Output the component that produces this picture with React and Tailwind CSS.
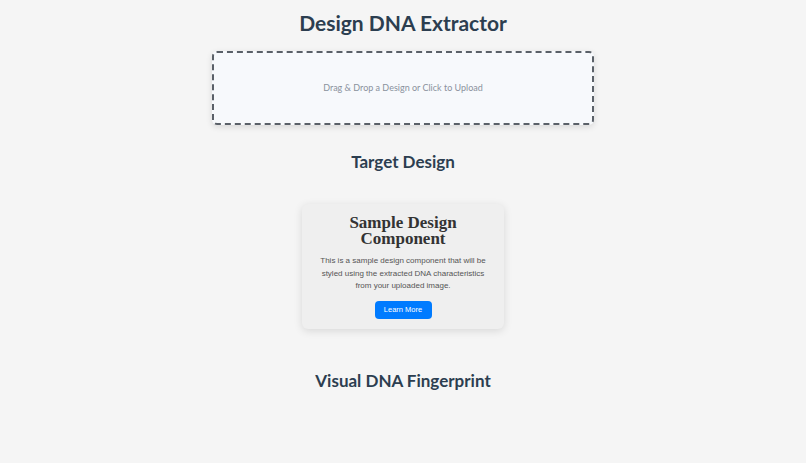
export default function App() {
  return (
    <div
      className="min-h-screen bg-[#f5f5f5] flex flex-col items-center pt-[8px]"
      style={{ fontFamily: "Lato, 'Segoe UI', sans-serif" }}
    >
      <h1 className="text-[21px] leading-[29px] font-bold text-[#2c3e50]">
        Design DNA Extractor
      </h1>

      {/* Upload zone */}
      <div className="mt-[14px] w-[382px] h-[74px] border-2 border-dashed border-[#5a6068] rounded-[5px] bg-[#f7f9fc] shadow-[0_2px_6px_rgba(0,0,0,0.12)] flex items-center justify-center cursor-pointer">
        <p className="text-[9px] text-[#8a919c]">
          Drag &amp; Drop a Design or Click to Upload
        </p>
      </div>

      <h2 className="mt-[25px] text-[17px] leading-[24px] font-bold text-[#2c3e50]">
        Target Design
      </h2>

      {/* Sample card */}
      <div className="mt-[30px] w-[202px] bg-[#efefef] rounded-[6px] shadow-[0_2px_8px_rgba(0,0,0,0.12)] px-[12px] pt-[11px] pb-[10px] flex flex-col items-center text-center">
        <h3
          className="text-[17px] leading-[16px] font-bold text-[#333]"
          style={{ fontFamily: "'Liberation Serif', Georgia, serif" }}
        >
          Sample Design Component
        </h3>
        <p
          className="mt-[8px] text-[8px] leading-[12.5px] text-[#555]"
          style={{ fontFamily: "'Liberation Sans', Arial, sans-serif" }}
        >
          This is a sample design component that will be styled using the
          extracted DNA characteristics from your uploaded image.
        </p>
        <button
          className="mt-[8px] w-[57px] h-[18px] rounded-[4px] bg-[#007bff] text-white text-[7.5px]"
          style={{ fontFamily: "'Liberation Sans', Arial, sans-serif" }}
        >
          Learn More
        </button>
      </div>

      <h2 className="mt-[40px] text-[17px] leading-[24px] font-bold text-[#2c3e50]">
        Visual DNA Fingerprint
      </h2>
    </div>
  );
}
